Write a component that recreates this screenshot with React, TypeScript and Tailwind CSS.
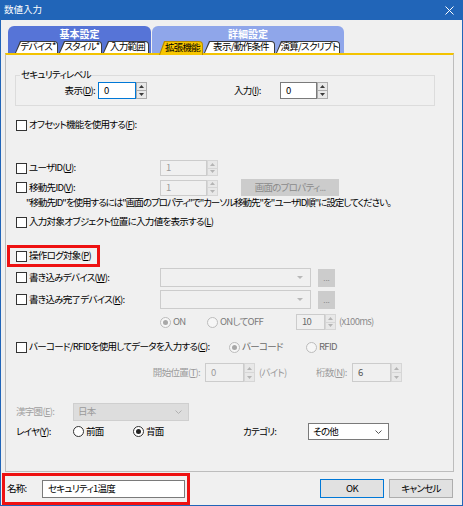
import React from "react";

const FONT = "font-['Noto_Sans_CJK_JP',sans-serif] [font-feature-settings:'palt']";

function Check() {
  return <span className="block w-[11px] h-[11px] border border-[#333333] bg-white shrink-0" />;
}

function Up({ c }: { c: string }) {
  return (
    <svg width="5" height="3" viewBox="0 0 5 3">
      <path d="M0 3L2.5 0L5 3Z" fill={c} />
    </svg>
  );
}
function Down({ c }: { c: string }) {
  return (
    <svg width="5" height="3" viewBox="0 0 5 3">
      <path d="M0 0L5 0L2.5 3Z" fill={c} />
    </svg>
  );
}

function Spin({ dis }: { dis?: boolean }) {
  const b = dis ? "border-[#d6d6d6]" : "border-[#acacac]";
  const c = dis ? "#b4b4b4" : "#3a3a3a";
  return (
    <div className="flex flex-col w-[11px] h-full shrink-0">
      <div className={`flex-1 flex items-center justify-center border ${b} bg-[#e8e8e8]`}>
        <Up c={c} />
      </div>
      <div className={`flex-1 flex items-center justify-center border border-t-0 ${b} bg-[#e8e8e8]`}>
        <Down c={c} />
      </div>
    </div>
  );
}

function NumField({
  v,
  fw,
  h,
  dis,
  focus,
  tc,
}: {
  v: string;
  fw: string;
  h: string;
  dis?: boolean;
  focus?: boolean;
  tc?: string;
}) {
  const border = focus ? "border-[#0078d7]" : dis ? "border-[#cccccc]" : "border-[#7a7a7a]";
  const bg = dis ? "bg-[#f0f0f0]" : "bg-white";
  return (
    <div className={`flex ${h} shrink-0`}>
      <div className={`${fw} h-full flex items-center pl-[5px] border ${border} ${bg} ${tc ?? ""}`}>{v}</div>
      <Spin dis={dis} />
    </div>
  );
}

function Radio({ checked, dis }: { checked?: boolean; dis?: boolean }) {
  return (
    <span
      className={`w-[11px] h-[11px] rounded-full border shrink-0 flex items-center justify-center ${
        dis ? "border-[#bcbcbc] bg-[#f6f6f6]" : "border-[#333333] bg-white"
      }`}
    >
      {checked && <span className={`w-[5px] h-[5px] rounded-full ${dis ? "bg-[#a8a8a8]" : "bg-[#222222]"}`} />}
    </span>
  );
}

function DisCombo() {
  return (
    <div className="w-[151px] h-[19px] border border-[#cccccc] bg-[#f0f0f0] flex items-center justify-end pr-[7px] shrink-0">
      <svg width="6" height="3" viewBox="0 0 6 3">
        <path d="M0 0L6 0L3 3Z" fill="#b8b8b8" />
      </svg>
    </div>
  );
}

function DotsBtn() {
  return (
    <div className="ml-[7px] w-[17px] h-[18px] bg-[#cccccc] flex items-center justify-center text-[#8a8a8a] text-[8px] tracking-normal shrink-0">
      ...
    </div>
  );
}

function Chevron({ c }: { c: string }) {
  return (
    <svg width="7" height="4" viewBox="0 0 7 4">
      <path d="M0.5 0.5L3.5 3.5L6.5 0.5" stroke={c} strokeWidth="1" fill="none" />
    </svg>
  );
}

function Tab({ label, w, sel }: { label: string; w: string; sel?: boolean }) {
  return (
    <div className={`grid shrink-0 ${w} ${sel ? "h-[14px] -mb-[2px] relative z-10" : "h-[12px]"}`}>
      <div
        className={`col-start-1 row-start-1 rounded-tr-[4px] [clip-path:polygon(5px_0,100%_0,100%_100%,0_100%)] ${
          sel ? "bg-[#b58c00]" : "bg-[#3c3c3c]"
        }`}
      />
      <div
        className={`col-start-1 row-start-1 mt-[1px] mx-[1px] rounded-tr-[3px] [clip-path:polygon(5px_0,100%_0,100%_100%,0_100%)] ${
          sel ? "bg-[#f7c600]" : "bg-white"
        }`}
      />
      <div className="col-start-1 row-start-1 flex items-center justify-center pl-[3px] relative">{label}</div>
    </div>
  );
}

export default function App() {
  return (
    <div
      className={`w-[463px] h-[506px] bg-[#2165b8] flex flex-col text-[9.5px] tracking-[-0.7px] leading-none whitespace-nowrap text-black ${FONT}`}
    >
      <div className="h-[20px] shrink-0 flex items-center justify-between pl-[4px] pr-[9px] text-white text-[9.5px] tracking-normal">
        <span>数値入力</span>
        <svg width="9" height="9" viewBox="0 0 9 9">
          <path d="M0.5 0.5L8.5 8.5M8.5 0.5L0.5 8.5" stroke="white" strokeWidth="1" />
        </svg>
      </div>

      <div className="flex-1 mx-[1px] mb-[1px] bg-[#f0f0f0] flex flex-col">
        {/* tab groups */}
        <div className="h-[33px] shrink-0 flex items-end pl-[7px] gap-[1px]">
          <div className="w-[143px] h-[27px] rounded-t-[6px] bg-[#5674d7] flex flex-col">
            <div className="h-[15px] flex items-center justify-center text-white font-bold text-[10px] tracking-normal">
              基本設定
            </div>
            <div className="flex-1 flex items-end pl-[7px] gap-[1px]">
              <Tab label="デバイス*" w="w-[43px]" />
              <Tab label="スタイル*" w="w-[43px]" />
              <Tab label="入力範囲" w="w-[46px]" />
            </div>
          </div>
          <div className="w-[192px] h-[27px] rounded-t-[6px] bg-[#8fa6ea] flex flex-col">
            <div className="h-[15px] flex items-center justify-center text-white font-bold text-[10px] tracking-normal">
              詳細設定
            </div>
            <div className="flex-1 flex items-end pl-[7px] gap-[1px]">
              <Tab label="拡張機能" w="w-[44px]" sel />
              <Tab label="表示/動作条件" w="w-[71px]" />
              <Tab label="演算/スクリプト" w="w-[64px]" />
            </div>
          </div>
        </div>

        {/* panel */}
        <div className="ml-[4px] w-[449px] h-[419px] shrink-0 border border-[#bdbdbd] border-t-2 border-t-[#f3c300] flex flex-col">
          {/* security level */}
          <div className="mt-[20px] ml-[9px] w-[420px] h-[31px] border border-[#dcdcdc] relative flex items-center">
            <span className="absolute left-[4px] -top-[6px] bg-[#f0f0f0] px-[1px]">セキュリティレベル</span>
            <span className="w-[79px] text-right">
              表示(<u>D</u>):
            </span>
            <div className="ml-[3px]">
              <NumField v="0" fw="w-[38px]" h="h-[17px]" focus />
            </div>
            <span className="ml-[87px] w-[34px]">
              入力(<u>I</u>):
            </span>
            <div className="ml-[12px]">
              <NumField v="0" fw="w-[37px]" h="h-[17px]" />
            </div>
          </div>

          {/* offset */}
          <div className="mt-[10px] h-[18px] pl-[10px] flex items-center gap-[2px]">
            <Check />
            <span>
              オフセット機能を使用する(<u>F</u>):
            </span>
          </div>

          {/* user id */}
          <div className="mt-[25px] h-[18px] pl-[10px] flex items-center">
            <div className="w-[144px] flex items-center gap-[2px]">
              <Check />
              <span>
                ユーザID(<u>U</u>):
              </span>
            </div>
            <NumField v="1" fw="w-[47px]" h="h-[16px]" dis tc="text-[#9a9a9a]" />
          </div>

          {/* move id */}
          <div className="mt-[2px] h-[17px] pl-[10px] flex items-center">
            <div className="w-[144px] flex items-center gap-[2px]">
              <Check />
              <span>
                移動先ID(<u>V</u>):
              </span>
            </div>
            <NumField v="1" fw="w-[47px]" h="h-[16px]" dis tc="text-[#9a9a9a]" />
            <div className="ml-[23px] w-[98px] h-[17px] bg-[#cccccc] text-[#8a8a8a] flex items-center justify-center">
              画面のプロパティ...
            </div>
          </div>

          {/* note */}
          <div className="mt-[1px] h-[12px] pl-[20px] flex items-center tracking-[-1px]">
            "移動先ID"を使用するには"画面のプロパティ"で"カーソル移動先"を"ユーザID順"に設定してください。
          </div>

          {/* display input value */}
          <div className="mt-[4px] h-[18px] pl-[10px] flex items-center gap-[2px]">
            <Check />
            <span>
              入力対象オブジェクト位置に入力値を表示する(<u>L</u>)
            </span>
          </div>

          {/* operation log (highlighted) */}
          <div className="mt-[14px] ml-[1px] w-[93px] h-[22px] border-[3px] border-[#ee1111] pl-[6px] flex items-center gap-[2px]">
            <Check />
            <span>
              操作ログ対象(<u>P</u>)
            </span>
          </div>

          {/* write device */}
          <div className="mt-[1px] h-[19px] pl-[10px] flex items-center">
            <div className="w-[144px] flex items-center gap-[2px]">
              <Check />
              <span>
                書き込みデバイス(<u>W</u>):
              </span>
            </div>
            <DisCombo />
            <DotsBtn />
          </div>

          {/* write complete device */}
          <div className="mt-[3px] h-[19px] pl-[10px] flex items-center">
            <div className="w-[144px] flex items-center gap-[2px]">
              <Check />
              <span>
                書き込み完了デバイス(<u>K</u>):
              </span>
            </div>
            <DisCombo />
            <DotsBtn />
          </div>

          {/* on / on-off */}
          <div className="mt-[5px] h-[16px] pl-[154px] flex items-center text-[#7a7a7a]">
            <div className="w-[47px] flex items-center gap-[2px]">
              <Radio checked dis />
              <span>ON</span>
            </div>
            <div className="w-[89px] flex items-center gap-[2px]">
              <Radio dis />
              <span>ONしてOFF</span>
            </div>
            <NumField v="10" fw="w-[29px]" h="h-[16px]" dis tc="text-[#6a6a6a]" />
            <span className="ml-[3px] text-[#8c8c8c]">(x100ms)</span>
          </div>

          {/* barcode */}
          <div className="mt-[8px] h-[18px] pl-[10px] flex items-center">
            <div className="w-[213px] flex items-center gap-[2px]">
              <Check />
              <span>
                バーコード/RFIDを使用してデータを入力する(<u>C</u>):
              </span>
            </div>
            <div className="w-[77px] flex items-center gap-[2px] text-[#6a6a6a]">
              <Radio checked dis />
              <span>バーコード</span>
            </div>
            <div className="flex items-center gap-[2px] text-[#6a6a6a]">
              <Radio dis />
              <span>RFID</span>
            </div>
          </div>

          {/* start position / digits */}
          <div className="mt-[7px] h-[19px] pl-[10px] flex items-center text-[#9a9a9a]">
            <span className="w-[184px] text-right">
              開始位置(<u>T</u>):
            </span>
            <div className="ml-[5px]">
              <NumField v="0" fw="w-[39px]" h="h-[19px]" dis tc="text-[#9a9a9a]" />
            </div>
            <span className="ml-[4px] w-[57px]">(バイト)</span>
            <span className="w-[33px]">
              桁数(<u>N</u>):
            </span>
            <div className="ml-[3px]">
              <NumField v="6" fw="w-[39px]" h="h-[19px]" dis tc="text-[#555555]" />
            </div>
          </div>

          {/* kanji */}
          <div className="mt-[21px] h-[18px] pl-[10px] flex items-center">
            <span className="w-[57px] text-[#a0a0a0]">
              漢字圏(<u>E</u>):
            </span>
            <div className="w-[116px] h-[18px] border border-[#cfcfcf] bg-[#dddddd] flex items-center justify-between pl-[4px] pr-[6px] text-[#9a9a9a]">
              <span>日本</span>
              <Chevron c="#b0b0b0" />
            </div>
          </div>

          {/* layer / category */}
          <div className="mt-[2px] h-[17px] pl-[10px] flex items-center">
            <span className="w-[57px]">
              レイヤ(<u>Y</u>):
            </span>
            <div className="w-[60px] flex items-center gap-[2px]">
              <Radio />
              <span>前面</span>
            </div>
            <div className="w-[110px] flex items-center gap-[2px]">
              <Radio checked />
              <span>背面</span>
            </div>
            <span className="w-[65px]">カテゴリ:</span>
            <div className="w-[81px] h-[17px] border border-[#7a7a7a] bg-white flex items-center justify-between pl-[4px] pr-[6px]">
              <span>その他</span>
              <Chevron c="#555555" />
            </div>
          </div>
        </div>

        {/* bottom */}
        <div className="flex-1 flex items-center">
          <div className="ml-[1px] w-[188px] h-[32px] border-[3px] border-[#ee1111] flex items-center pl-[2px]">
            <span className="w-[35px]">名称:</span>
            <div className="w-[143px] h-[18px] border border-[#7a7a7a] bg-white flex items-center pl-[5px]">
              セキュリティ1温度
            </div>
          </div>
          <div className="ml-[130px] w-[64px] h-[19px] border border-[#0078d7] bg-[#e1e1e1] flex items-center justify-center">
            OK
          </div>
          <div className="ml-[5px] w-[64px] h-[19px] border border-[#adadad] bg-[#e1e1e1] flex items-center justify-center">
            キャンセル
          </div>
        </div>
      </div>
    </div>
  );
}
